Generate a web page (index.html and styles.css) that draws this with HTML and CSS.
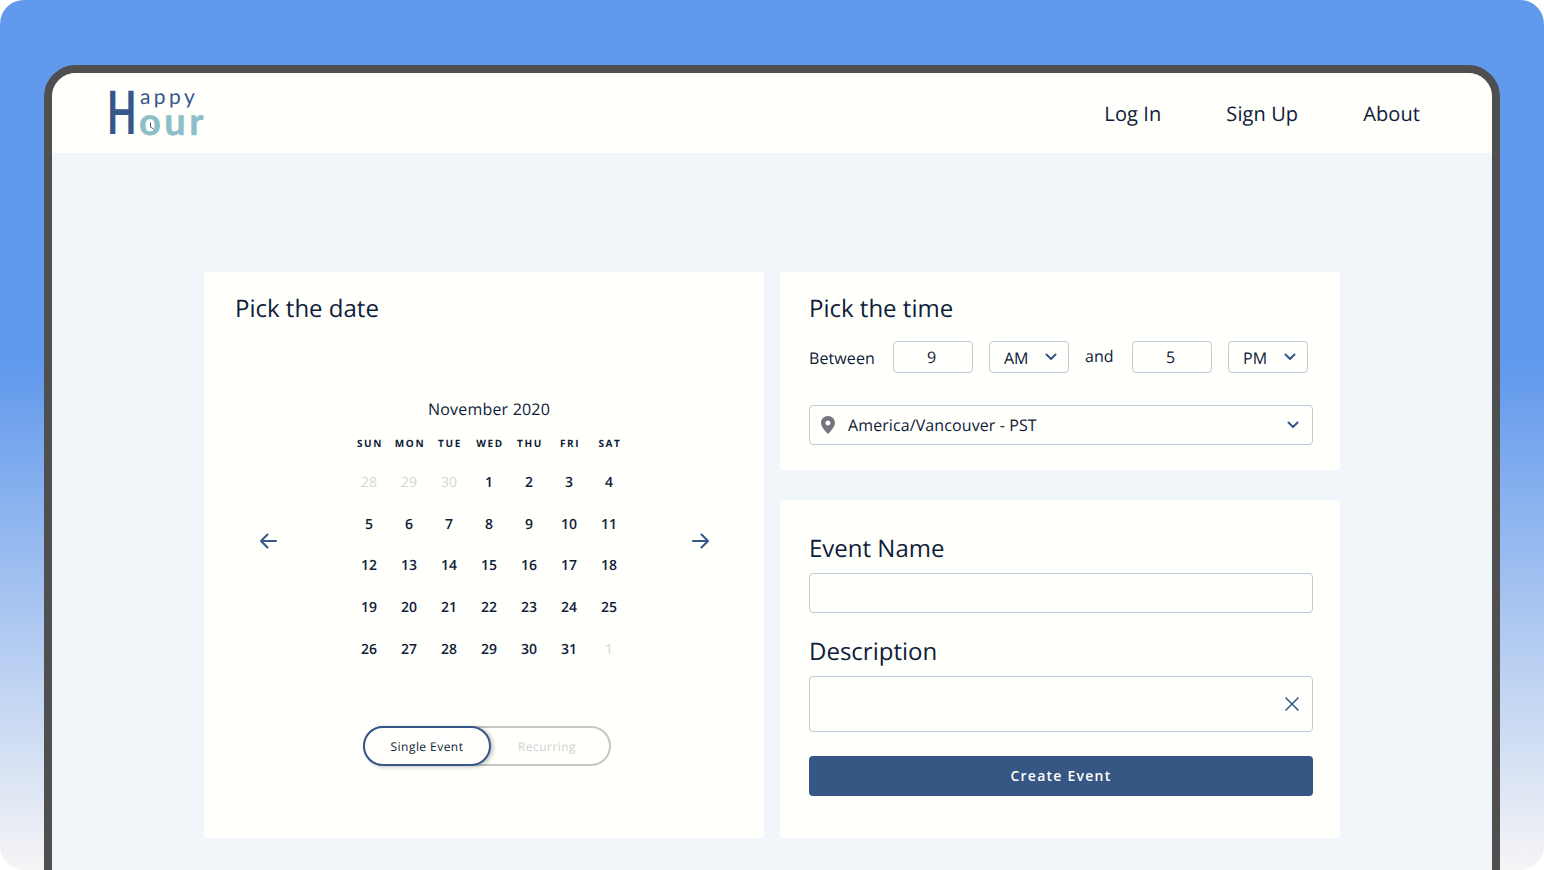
FILE: index.html
```html
<!DOCTYPE html>
<html lang="en">
<head>
<meta charset="utf-8">
<title>Happy Hour</title>
<link rel="stylesheet" href="styles.css">
</head>
<body>
<div class="stage">
  <div class="frame">
    <header class="topbar">
      <div class="logo">
        <span class="logo-h">H</span>
        <div class="logo-rest">
          <span class="logo-appy">appy</span>
          <span class="logo-our"><span class="logo-o">o<svg class="logo-clock" viewBox="0 0 8 10"><path d="M2.500 1.500V6L5.500 8" fill="none" stroke="#35578a" stroke-width="1"/></svg></span>ur</span>
        </div>
      </div>
      <nav class="nav">
        <a class="nav-link">Log In</a>
        <a class="nav-link">Sign Up</a>
        <a class="nav-link">About</a>
      </nav>
    </header>
    <main class="content">
      <section class="card date-card">
        <h2 class="card-title">Pick the date</h2>
        <div class="cal-row">
          <svg class="arrow" viewBox="0 0 24 24"><path d="M20 12H5M11.500 5.500L5 12l6.500 6.500" fill="none" stroke="#35578a" stroke-width="2" stroke-linecap="round" stroke-linejoin="round"/></svg>
          <div class="calendar">
            <div class="month">November 2020</div>
            <div class="weekdays">
              <span>SUN</span><span>MON</span><span>TUE</span><span>WED</span><span>THU</span><span>FRI</span><span>SAT</span>
            </div>
            <div class="days">
              <span class="off">28</span><span class="off">29</span><span class="off">30</span><span>1</span><span>2</span><span>3</span><span>4</span>
              <span>5</span><span>6</span><span>7</span><span>8</span><span>9</span><span>10</span><span>11</span>
              <span>12</span><span>13</span><span>14</span><span>15</span><span>16</span><span>17</span><span>18</span>
              <span>19</span><span>20</span><span>21</span><span>22</span><span>23</span><span>24</span><span>25</span>
              <span>26</span><span>27</span><span>28</span><span>29</span><span>30</span><span>31</span><span class="off">1</span>
            </div>
          </div>
          <svg class="arrow" viewBox="0 0 24 24"><path d="M4 12H19M12.500 5.500L19 12l-6.500 6.500" fill="none" stroke="#35578a" stroke-width="2" stroke-linecap="round" stroke-linejoin="round"/></svg>
        </div>
        <div class="toggle">
          <div class="toggle-on">Single Event</div>
          <div class="toggle-off">Recurring</div>
        </div>
      </section>
      <div class="right-col">
        <section class="card time-card">
          <h2 class="card-title">Pick the time</h2>
          <div class="time-row">
            <span class="between">Between</span>
            <div class="box num">9</div>
            <div class="box ampm"><span>AM</span><svg class="chev" viewBox="0 0 12 8"><path d="M1.500 1.500L6 6l4.500-4.500" fill="none" stroke="#35578a" stroke-width="2" stroke-linecap="round" stroke-linejoin="round"/></svg></div>
            <span class="and">and</span>
            <div class="box num">5</div>
            <div class="box ampm pm"><span>PM</span><svg class="chev" viewBox="0 0 12 8"><path d="M1.500 1.500L6 6l4.500-4.500" fill="none" stroke="#35578a" stroke-width="2" stroke-linecap="round" stroke-linejoin="round"/></svg></div>
          </div>
          <div class="box zone">
            <svg class="pin" viewBox="0 0 14 18"><path fill-rule="evenodd" d="M7 0C3 0 0 3 0 7c0 4.500 7 11 7 11s7-6.500 7-11c0-4-3-7-7-7zm0 9.500A2.500 2.500 0 1 1 7 4.500a2.500 2.500 0 0 1 0 5z" fill="#74757f"/></svg>
            <span class="zone-text">America/Vancouver - PST</span>
            <svg class="chev" viewBox="0 0 12 8"><path d="M1.500 1.500L6 6l4.500-4.500" fill="none" stroke="#35578a" stroke-width="2" stroke-linecap="round" stroke-linejoin="round"/></svg>
          </div>
        </section>
        <section class="card event-card">
          <h2 class="card-title">Event Name</h2>
          <div class="box field"></div>
          <h2 class="card-title desc-title">Description</h2>
          <div class="box field desc">
            <svg class="close" viewBox="0 0 16 16"><path d="M1.500 1.500l13 13M14.500 1.500l-13 13" fill="none" stroke="#35578a" stroke-width="1.500"/></svg>
          </div>
          <button class="create">Create Event</button>
        </section>
      </div>
    </main>
  </div>
</div>
</body>
</html>
```
FILE: styles.css
```css
* { box-sizing: border-box; }
html { background: #fff; }
body {
  margin: 0;
  font-family: "Open Sans", "Liberation Sans", sans-serif;
  color: #0e2038;
  text-rendering: geometricPrecision;
}

.stage {
  height: 870px;
  padding: 65px 44px 0;
  overflow: hidden;
  border-radius: 24px;
  background: linear-gradient(180deg, #6199ec 0%, #6199ec 42%, #f6f5f6 100%);
}
.frame {
  height: 860px;
  border: 8px solid #4f4f4f;
  border-radius: 32px 32px 0 0;
  background: #f1f6fa;
  overflow: hidden;
}
.topbar {
  height: 80px;
  background: #fffffc;
  display: flex;
  align-items: center;
  justify-content: space-between;
  padding: 0 72px 0 56px;
}
.logo { display: flex; align-items: flex-start; height: 50px; color: #35578a; font-family: Lato, sans-serif; }
.logo-h {
  display: block;
  width: 32px;
  margin: -2px 0 0 -1px;
  font-size: 60px;
  line-height: 50px;
  font-weight: 700;
  transform: scaleX(.64);
  transform-origin: left center;
}
.logo-rest { display: flex; flex-direction: column; margin-left: 1px; }
.logo-appy { font-size: 21px; line-height: 20px; letter-spacing: 3.4px; margin-top: -1px; }
.logo-our {
  font-size: 38px;
  line-height: 28px;
  font-weight: 700;
  color: #8dbfc8;
  letter-spacing: 3.500px;
  margin-left: -1px;
  -webkit-text-stroke: .5px #8dbfc8;
}
.logo-o { position: relative; }
.logo-clock { position: absolute; left: 9px; top: 23px; width: 8px; height: 10px; }
.nav { display: flex; gap: 65px; margin-top: 2px; }
.nav-link { font-size: 20px; line-height: 28px; letter-spacing: .1px; }

.content {
  display: grid;
  grid-template-columns: 560px 560px;
  column-gap: 16px;
  padding: 119px 0 0 152px;
}
.card { background: #fffffc; border-radius: 4px; }
.card-title { margin: 0; font-size: 24px; line-height: 32px; font-weight: 400; }

.date-card { height: 566px; padding: 21px 0 0 31px; display: flex; flex-direction: column; }
.cal-row { display: flex; align-items: center; padding-left: 21px; margin-top: 72px; }
.arrow { width: 24px; height: 24px; flex: none; margin-top: 15px; }
.calendar { width: 280px; margin: 0 60px 0 69px; flex: none; }
.month { text-align: center; font-size: 16px; line-height: 24px; letter-spacing: .2px; }
.weekdays {
  display: grid;
  grid-template-columns: repeat(7, 40px);
  font-size: 10px;
  line-height: 14px;
  font-weight: 700;
  letter-spacing: 1.6px;
  text-align: center;
  margin-top: 15px;
  padding-left: 1px;
}
.days {
  display: grid;
  grid-template-columns: repeat(7, 40px);
  grid-auto-rows: 41.75px;
  align-items: center;
  text-align: center;
  font-size: 14px;
  font-weight: 600;
  margin-top: 11.500px;
}
.off { color: #d5d5d5; font-weight: 400; }
.toggle {
  align-self: flex-start;
  margin: 55.500px 0 0 128px;
  width: 248px;
  height: 40px;
  border: 2px solid #c6c6c6;
  border-radius: 20px;
  display: flex;
  font-size: 12px;
  letter-spacing: .45px;
}
.toggle-on {
  width: 128px;
  height: 40px;
  margin: -2px 0 0 -2px;
  padding-top: 2px;
  border: 2px solid #35578a;
  border-radius: 20px;
  background: #fffffc;
  box-shadow: 2px 1px 4px rgba(0, 0, 0, .25);
  display: flex;
  align-items: center;
  justify-content: center;
}
.toggle-off { flex: 1; display: flex; align-items: center; justify-content: center; color: #cfcfcf; padding: 2px 6px 0 0; }

.right-col { display: flex; flex-direction: column; gap: 30px; }
.time-card { height: 198px; padding: 21px 27px 0 29px; }
.time-row { display: flex; align-items: center; gap: 16px; margin-top: 16px; font-size: 16px; }
.box { border: 1px solid #bccbd9; border-radius: 4px; background: #fffffc; }
.between { width: 68px; padding-top: 2px; letter-spacing: .1px; }
.and { width: 31px; margin-top: -2px; }
.num { width: 80px; height: 32px; display: flex; align-items: center; justify-content: center; padding-right: 3px; }
.ampm { width: 80px; height: 32px; display: flex; align-items: center; justify-content: space-between; padding: 2px 11px 0 14px; }
.pm .chev { margin-top: -4px; }
.ampm .chev { margin-top: -2px; }
.chev { width: 12px; height: 8px; flex: none; }
.zone { width: 504px; height: 40px; margin-top: 32px; display: flex; align-items: center; padding: 0 13px 0 11px; font-size: 16px; }
.pin { width: 14px; height: 18px; flex: none; margin-top: -1px; }
.zone-text { flex: 1; margin-left: 13px; letter-spacing: .1px; }

.event-card { height: 338px; padding: 33px 27px 0 29px; }
.field { width: 504px; height: 40px; margin-top: 8px; }
.desc-title { margin-top: 23px; }
.desc { height: 56px; display: flex; align-items: center; justify-content: flex-end; padding-right: 12.500px; }
.close { width: 16px; height: 16px; }
.create {
  display: block;
  width: 504px;
  height: 40px;
  margin-top: 24px;
  padding-bottom: 2px;
  border: 0;
  border-radius: 4px;
  background: #365684;
  color: #fffffc;
  font-family: inherit;
  font-size: 14px;
  font-weight: 600;
  letter-spacing: 1.25px;
}
```
